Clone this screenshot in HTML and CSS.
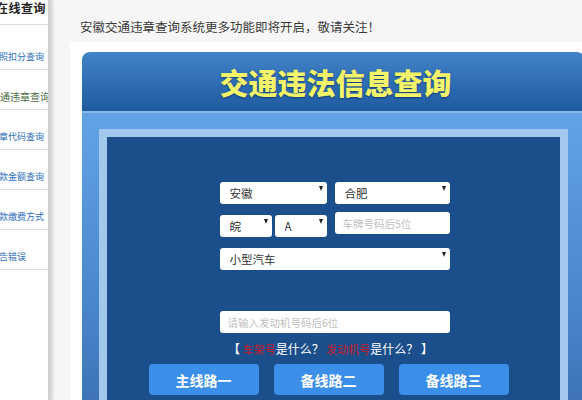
FILE: index.html
```html
<!DOCTYPE html>
<html lang="zh-CN">
<head>
    <meta charset="UTF-8">
    <meta name="viewport" content="width=device-width, initial-scale=1.0">
    <title>交通违法信息查询</title>
    <link rel="stylesheet" href="styles.css">
</head>
<body>

    <div class="sidebar">
        <h3 class="side-title">在线查询</h3>
        <ul class="side-menu">
            <li><a href="#">驾照扣分查询</a></li>
            <li class="active"><a href="#">交通违章查询</a></li>
            <li><a href="#">违章代码查询</a></li>
            <li><a href="#">罚款金额查询</a></li>
            <li><a href="#">罚款缴费方式</a></li>
            <li><a href="#">报告错误</a></li>
        </ul>
    </div>

    <div class="main">
        <p class="notice">安徽交通违章查询系统更多功能即将开启，敬请关注！</p>

        <div class="panel">
            <div class="query-box">
                <div class="query-head">
                    <h1>交通违法信息查询</h1>
                </div>
                <div class="query-body">
                    <div class="query-frame">
                        <form class="query-form" onsubmit="return false">
                            <div class="row">
                                <div class="select-wrap wide">
                                    <select aria-label="省份"><option>安徽</option></select>
                                </div>
                                <div class="select-wrap wide">
                                    <select aria-label="城市"><option>合肥</option></select>
                                </div>
                            </div>
                            <div class="row">
                                <div class="select-wrap small">
                                    <select aria-label="车牌简称"><option>皖</option></select>
                                </div>
                                <div class="select-wrap small">
                                    <select aria-label="车牌字母"><option>A</option></select>
                                </div>
                                <input type="text" class="field wide" placeholder="车牌号码后5位">
                            </div>
                            <div class="row">
                                <div class="select-wrap full">
                                    <select aria-label="车辆类型"><option>小型汽车</option></select>
                                </div>
                            </div>
                            <div class="row engine-row">
                                <input type="text" class="field full" placeholder="请输入发动机号码后6位">
                            </div>
                        </form>

                        <p class="help">【 <a href="#">车架号</a>是什么？ <a href="#">发动机号</a>是什么？ 】</p>

                        <div class="lines">
                            <button type="button">主线路一</button>
                            <button type="button">备线路二</button>
                            <button type="button">备线路三</button>
                        </div>
                    </div>
                </div>
            </div>
        </div>
    </div>

</body>
</html>
```

FILE: styles.css
```css
body {
    margin: 0;
    height: 400px;
    overflow: hidden;
    display: flex;
    background-color: #f6f6f6;
    font-family: "Noto Sans CJK SC", "Noto Sans", sans-serif;
    color: #333;
}

/* left menu, cut off by the screenshot */
.sidebar {
    width: 48px;
    flex-shrink: 0;
    background-color: #fff;
    border-right: 3px solid #d2d2d2;
    box-shadow: 2px 0 3px rgba(0, 0, 0, 0.12);
    overflow: hidden;
}

.side-title {
    margin: 0;
    height: 24px;
    border-bottom: 1px solid #dcdcdc;
    font-size: 12px;
    line-height: 15px;
    font-weight: bold;
    color: #222;
    white-space: nowrap;
    text-indent: -4px;
    letter-spacing: 0.5px;
}

.side-menu {
    list-style: none;
    margin: 5px 0 0;
    padding: 0;
}

.side-menu li {
    height: 40px;
    box-sizing: border-box;
    border-bottom: 1px solid #dcdcdc;
    display: flex;
    align-items: flex-end;
    padding-bottom: 7px;
    white-space: nowrap;
}

.side-menu a {
    margin-left: -10px;
    font-size: 9px;
    line-height: 11px;
    color: #2b6cb8;
    text-decoration: none;
}

.side-menu .active a {
    font-size: 10px;
    color: #4b6b3e;
}

.main {
    flex: 1;
    margin-left: 19px;
    display: flex;
    flex-direction: column;
    min-width: 0;
}

.notice {
    flex-shrink: 0;
    margin: 0;
    height: 42px;
    box-sizing: border-box;
    padding: 19px 0 0 10px;
    font-size: 12.5px;
    line-height: 16px;
    color: #3a3a3a;
    white-space: nowrap;
}

.panel {
    flex: 1;
    background-color: #fff;
    padding: 10px 0 0 12px;
}

.query-box {
    width: 503px;
    border-radius: 8px 8px 0 0;
    overflow: hidden;
}

.query-head {
    height: 59px;
    background: linear-gradient(#4283c8, #1e5aa0);
    border-bottom: 2px solid #86b8ea;
    display: flex;
    justify-content: center;
    align-items: center;
}

.query-head h1 {
    margin: 0 0 0 4px;
    font-size: 29px;
    line-height: 34px;
    font-weight: 900;
    color: #f4f46a;
    text-shadow: 0 1px 2px rgba(10, 40, 90, 0.7);
}

.query-body {
    height: 300px;
    padding: 16px 17px 0;
    background: linear-gradient(#62a3e8, #4a86cc 60%, #3a6fb0);
}

.query-frame {
    height: 400px;
    border: 8px solid #a3c8ee;
    background-color: #1b4f8b;
    padding-top: 42px;
}

.query-form {
    width: 230px;
    margin: 0 auto;
    padding-left: 2px;
}

.row {
    display: flex;
    gap: 3px;
    margin-bottom: 11px;
}

.row .wide {
    width: 107px;
}

.row .wide + .wide,
.row .field.wide {
    margin-left: 5px;
    width: 115px;
}

.row .small {
    width: 52px;
}

.row .full {
    width: 230px;
}

.engine-row {
    margin-top: 44px;
    margin-bottom: 8px;
}

.select-wrap {
    position: relative;
    height: 22px;
}

.select-wrap select {
    width: 100%;
    height: 22px;
    appearance: none;
    -webkit-appearance: none;
    border: none;
    border-radius: 3px;
    background-color: #fff;
    padding: 0 0 0 10px;
    font-family: inherit;
    font-size: 11.5px;
    color: #333;
}

/* small arrow of the select box */
.select-wrap::after {
    content: "";
    position: absolute;
    right: 4px;
    top: 7px;
    border-left: 2.5px solid transparent;
    border-right: 2.5px solid transparent;
    border-top: 5px solid #222;
    pointer-events: none;
}

.field {
    height: 22px;
    box-sizing: border-box;
    border: none;
    border-radius: 3px;
    background-color: #fff;
    padding: 0 8px;
    font-family: inherit;
    font-size: 10.5px;
    color: #333;
}

.field::placeholder {
    color: #c0c0c0;
}

.help {
    margin: 0;
    text-align: center;
    font-size: 12px;
    line-height: 16px;
    color: #fff;
    padding-right: 6px;
}

.help a {
    color: #c81a2a;
    font-size: 11px;
    text-decoration: none;
}

.lines {
    display: flex;
    justify-content: center;
    gap: 15px;
    margin-top: 7px;
    padding-right: 10px;
}

.lines button {
    width: 110px;
    height: 31px;
    border: none;
    border-radius: 4px;
    background-color: #3b8fe8;
    color: #fff;
    font-family: inherit;
    font-size: 14px;
    font-weight: bold;
    cursor: pointer;
}

.lines button:hover {
    background-color: #2f80d6;
}
```
